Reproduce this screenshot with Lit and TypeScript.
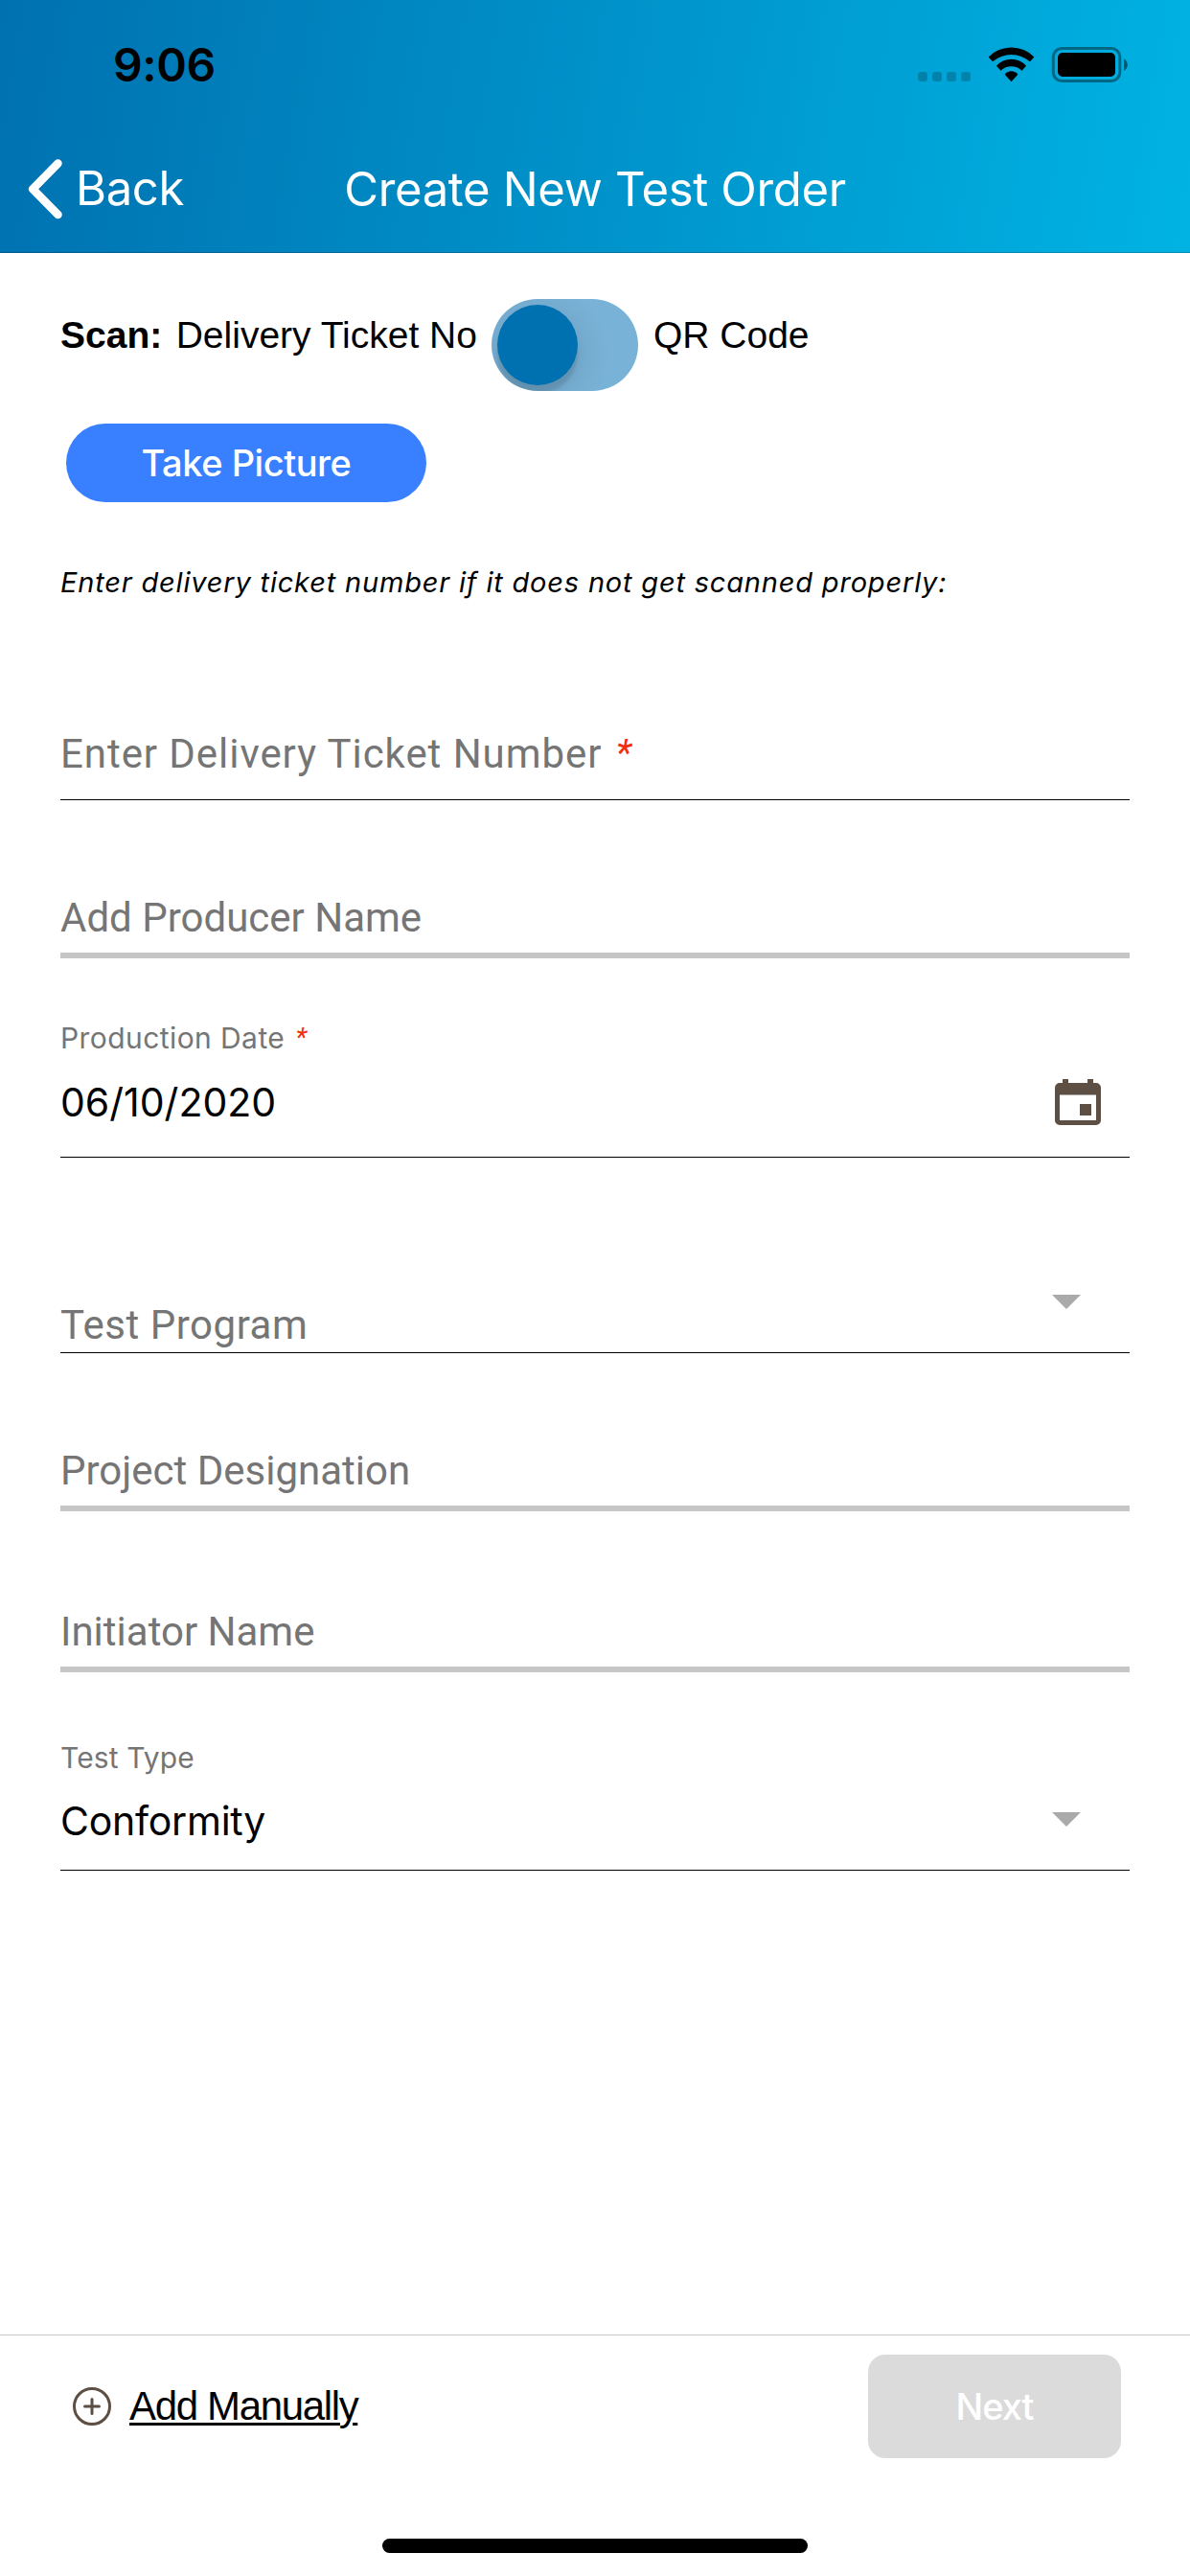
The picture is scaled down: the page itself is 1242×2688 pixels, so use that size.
import { LitElement, html, css } from 'lit';
import { customElement, property, state } from 'lit/decorators.js';
import { classMap } from 'lit/directives/class-map.js';

@customElement('form-field')
class FormField extends LitElement {
  @property() label = '';
  @property() value = '';
  @property() icon = ''; // 'calendar' or 'arrow'
  @property({ type: Boolean }) required = false;
  @property({ type: Boolean }) plain = false; // thick grey underline

  static styles = css`
    :host {
      display: block;
      color: #757575;
    }
    .field {
      display: flex;
      flex-direction: column;
      border-bottom: 1px solid #000;
    }
    .field.plain {
      border-bottom: 6px solid #c6c6c6;
      padding-bottom: 6px;
    }
    .field.text {
      padding-bottom: 17px;
    }
    .field.date {
      padding-bottom: 27px;
    }
    .field.picked {
      padding-bottom: 21px;
    }
    .placeholder {
      font: 400 42px/60px Roboto, sans-serif;
      white-space: pre;
    }
    .text .placeholder {
      letter-spacing: 0.94px;
    }
    .select .placeholder {
      line-height: 56px;
      letter-spacing: 0.52px;
    }
    .label {
      font: 400 30px/40px Inter, sans-serif;
      letter-spacing: 0.42px;
      margin-bottom: 17px;
      white-space: pre;
    }
    .picked .label {
      letter-spacing: 0.12px;
      margin-bottom: 16px;
    }
    .star {
      margin-left: 4px;
      font-family: Roboto, sans-serif;
      font-size: 0.93em;
      font-style: italic;
      line-height: 0;
      vertical-align: 0.06em;
      color: #f32c0c;
    }
    .row {
      display: flex;
      justify-content: space-between;
    }
    .select .row {
      height: 74px;
      align-items: flex-end;
    }
    .value {
      font: 400 41px/60px Inter, sans-serif;
      color: #000;
    }
    .picked .value {
      letter-spacing: -0.24px;
    }
    .calendar {
      width: 48px;
      height: 48px;
      margin: 6px 30px 0 0;
    }
    .arrow {
      width: 30px;
      height: 15px;
      margin: 21px 51px 0 0;
    }
    .select .arrow {
      align-self: flex-start;
      margin-top: 14px;
    }
    svg {
      display: block;
    }
  `;

  renderIcon() {
    if (this.icon === 'calendar') {
      return html`
        <svg class="calendar" viewBox="0 0 48 48">
          <path fill="#5d4f43" fill-rule="evenodd" d="M8 0h6v4h20V0h6v4h3a5 5 0 0 1 5 5v34a5 5 0 0 1-5 5H5a5 5 0 0 1-5-5V9a5 5 0 0 1 5-5h3zM5 16.500v26.500h38V16.500zM26 26h12v12H26z" />
        </svg>`;
    }
    if (this.icon === 'arrow') {
      return html`<svg class="arrow" viewBox="0 0 30 15"><path fill="#aaa" d="M0 0h30L15 15z" /></svg>`;
    }
    return '';
  }

  render() {
    const star = this.required ? html`<span class="star"> *</span>` : '';
    const classes = {
      field: true,
      plain: this.plain,
      text: !this.plain && !this.value && !this.icon,
      select: !this.value && this.icon === 'arrow',
      date: this.icon === 'calendar',
      picked: !!this.value && this.icon === 'arrow',
    };
    return html`
      <div class=${classMap(classes)}>
        ${this.value ? html`<div class="label">${this.label}${star}</div>` : ''}
        <div class="row">
          ${this.value
            ? html`<div class="value">${this.value}</div>`
            : html`<div class="placeholder">${this.label}${star}</div>`}
          ${this.renderIcon()}
        </div>
      </div>
    `;
  }
}

@customElement('app-root')
class AppRoot extends LitElement {
  @state() private qrCode = false;

  static styles = css`
    :host {
      display: flex;
      flex-direction: column;
      width: 1242px;
      height: 2688px;
      background: #fff;
      color: #000;
      font-family: Inter, sans-serif;
    }
    header {
      box-sizing: border-box;
      height: 264px;
      background: linear-gradient(100deg, #0071b0, #00b3e3);
      border-bottom: 1px solid rgba(0, 0, 0, 0.2);
    }
    .status {
      display: flex;
      justify-content: space-between;
      height: 94px;
      padding: 38px 64px 0 118px;
    }
    .time {
      font: 600 48px/60px Inter, sans-serif;
      letter-spacing: -0.42px;
    }
    .status svg {
      width: 222px;
      height: 40px;
      margin-top: 10px;
    }
    .nav {
      display: grid;
      grid-template-columns: 1fr auto 1fr;
      padding-top: 34px;
      color: #fff;
      font: 400 49px/60px Inter, sans-serif;
    }
    .back {
      display: flex;
      padding-left: 28px;
      letter-spacing: -0.36px;
    }
    .back svg {
      width: 40px;
      height: 64px;
      margin-right: 11px;
    }
    .back span {
      margin-top: 1px;
    }
    .title {
      margin-top: 2px;
      letter-spacing: -0.33px;
    }
    main {
      flex: 1;
      padding: 48px 63px 0;
    }
    .scan {
      display: flex;
      height: 96px;
      font: 400 39px/75px 'Liberation Sans', Arial, sans-serif;
    }
    .scan b {
      margin-right: 14.5px;
    }
    .toggle {
      box-sizing: border-box;
      width: 153px;
      height: 96px;
      margin: 0 15.5px;
      padding: 6px;
      border-radius: 48px;
      background: #79b2d7;
      overflow: hidden;
    }
    .knob {
      width: 84px;
      height: 84px;
      border-radius: 50%;
      background: #0071b0;
      box-shadow: 0 9px 36px rgba(0, 0, 0, 0.16), 0 9px 3px rgba(0, 0, 0, 0.1);
    }
    .toggle.on .knob {
      margin-left: auto;
    }
    button {
      display: block;
      padding: 0;
      border: 0;
      color: #fff;
      font: 500 38px Inter, sans-serif;
    }
    .take {
      width: 376px;
      height: 82px;
      margin: 34px 0 0 6px;
      border-radius: 41px;
      background: #3880ff;
      letter-spacing: -0.46px;
    }
    .hint {
      margin-top: 64px;
      font: italic 400 29px/40px Inter, sans-serif;
      letter-spacing: 0.81px;
    }
    .ticket {
      margin-top: 129px;
    }
    .producer {
      margin-top: 93px;
    }
    .production {
      margin-top: 63px;
    }
    .program {
      margin-top: 129px;
    }
    .project {
      margin-top: 93px;
    }
    .initiator {
      margin-top: 96px;
    }
    .type {
      margin-top: 69px;
    }
    footer {
      box-sizing: border-box;
      height: 252px;
      border-top: 1px solid #c8c8c8;
      padding-top: 20px;
    }
    .actions {
      display: flex;
      align-items: center;
      justify-content: space-between;
      padding: 0 72px 0 75px;
    }
    .add {
      display: flex;
      align-items: center;
      gap: 18px;
      color: #000;
      font: 400 42px/60px 'Liberation Sans', Arial, sans-serif;
      letter-spacing: -1.35px;
      text-decoration: underline;
      text-decoration-thickness: 2.5px;
      text-underline-offset: 3px;
    }
    .add svg {
      width: 42px;
      height: 42px;
    }
    .next {
      width: 264px;
      height: 108px;
      border-radius: 18px;
      background: #dbdbdb;
      letter-spacing: -1px;
    }
    .home {
      width: 444px;
      height: 15px;
      margin: 84px auto 0;
      border-radius: 8px;
      background: #000;
    }
  `;

  toggleScan() {
    this.qrCode = !this.qrCode;
  }

  render() {
    return html`
      <header>
        <div class="status">
          <div class="time">9:06</div>
          <svg viewBox="956 48 222 40">
            <g opacity="0.2">
              <rect x="958" y="75" width="10" height="10" rx="3" />
              <rect x="973" y="75" width="10" height="10" rx="3" />
              <rect x="988" y="75" width="10" height="10" rx="3" />
              <rect x="1003" y="75" width="10" height="10" rx="3" />
            </g>
            <path d="M1031.700 59.500A33.300 33.300 0 0 1 1079.300 59.500L1075 64.300A29.700 29.700 0 0 0 1036 64.300Z" />
            <path d="M1040 68.700A20.600 20.600 0 0 1 1071 68.700L1066.500 73.700A16 16 0 0 0 1044.500 73.700Z" />
            <path d="M1048.700 77.700A8.500 8.500 0 0 1 1062.300 77.700L1055.500 85.300Z" />
            <rect x="1099.300" y="50.500" width="69.500" height="34" rx="9" fill="none" stroke="#000" stroke-width="3" opacity="0.4" />
            <rect x="1104" y="55" width="60" height="25" rx="5" />
            <path d="M1173 61.300c5 2.500 5 10.200 0 12.700z" opacity="0.5" />
          </svg>
        </div>
        <div class="nav">
          <div class="back">
            <svg viewBox="0 0 40 64" fill="none" stroke="#fff" stroke-width="8.500" stroke-linecap="round" stroke-linejoin="round">
              <path d="M32.500 4.500L6.200 31.200L32.500 58" />
            </svg>
            <span>Back</span>
          </div>
          <div class="title">Create New Test Order</div>
        </div>
      </header>

      <main>
        <div class="scan">
          <b>Scan:</b>
          <span>Delivery Ticket No</span>
          <div class=${classMap({ toggle: true, on: this.qrCode })} @click=${this.toggleScan}>
            <div class="knob"></div>
          </div>
          <span>QR Code</span>
        </div>
        <button class="take">Take Picture</button>
        <div class="hint">Enter delivery ticket number if it does not get scanned properly:</div>

        <form-field class="ticket" label="Enter Delivery Ticket Number" required></form-field>
        <form-field class="producer" label="Add Producer Name" plain></form-field>
        <form-field class="production" label="Production Date" value="06/10/2020" icon="calendar" required></form-field>
        <form-field class="program" label="Test Program" icon="arrow"></form-field>
        <form-field class="project" label="Project Designation" plain></form-field>
        <form-field class="initiator" label="Initiator Name" plain></form-field>
        <form-field class="type" label="Test Type" value="Conformity" icon="arrow"></form-field>
      </main>

      <footer>
        <div class="actions">
          <div class="add">
            <svg viewBox="0 0 42 42" fill="none" stroke="#5d4f43" stroke-width="3" stroke-linecap="round">
              <circle cx="21" cy="21" r="18.500" />
              <path d="M21 13.500v15M13.500 21h15" />
            </svg>
            <span>Add Manually</span>
          </div>
          <button class="next">Next</button>
        </div>
        <div class="home"></div>
      </footer>
    `;
  }
}
